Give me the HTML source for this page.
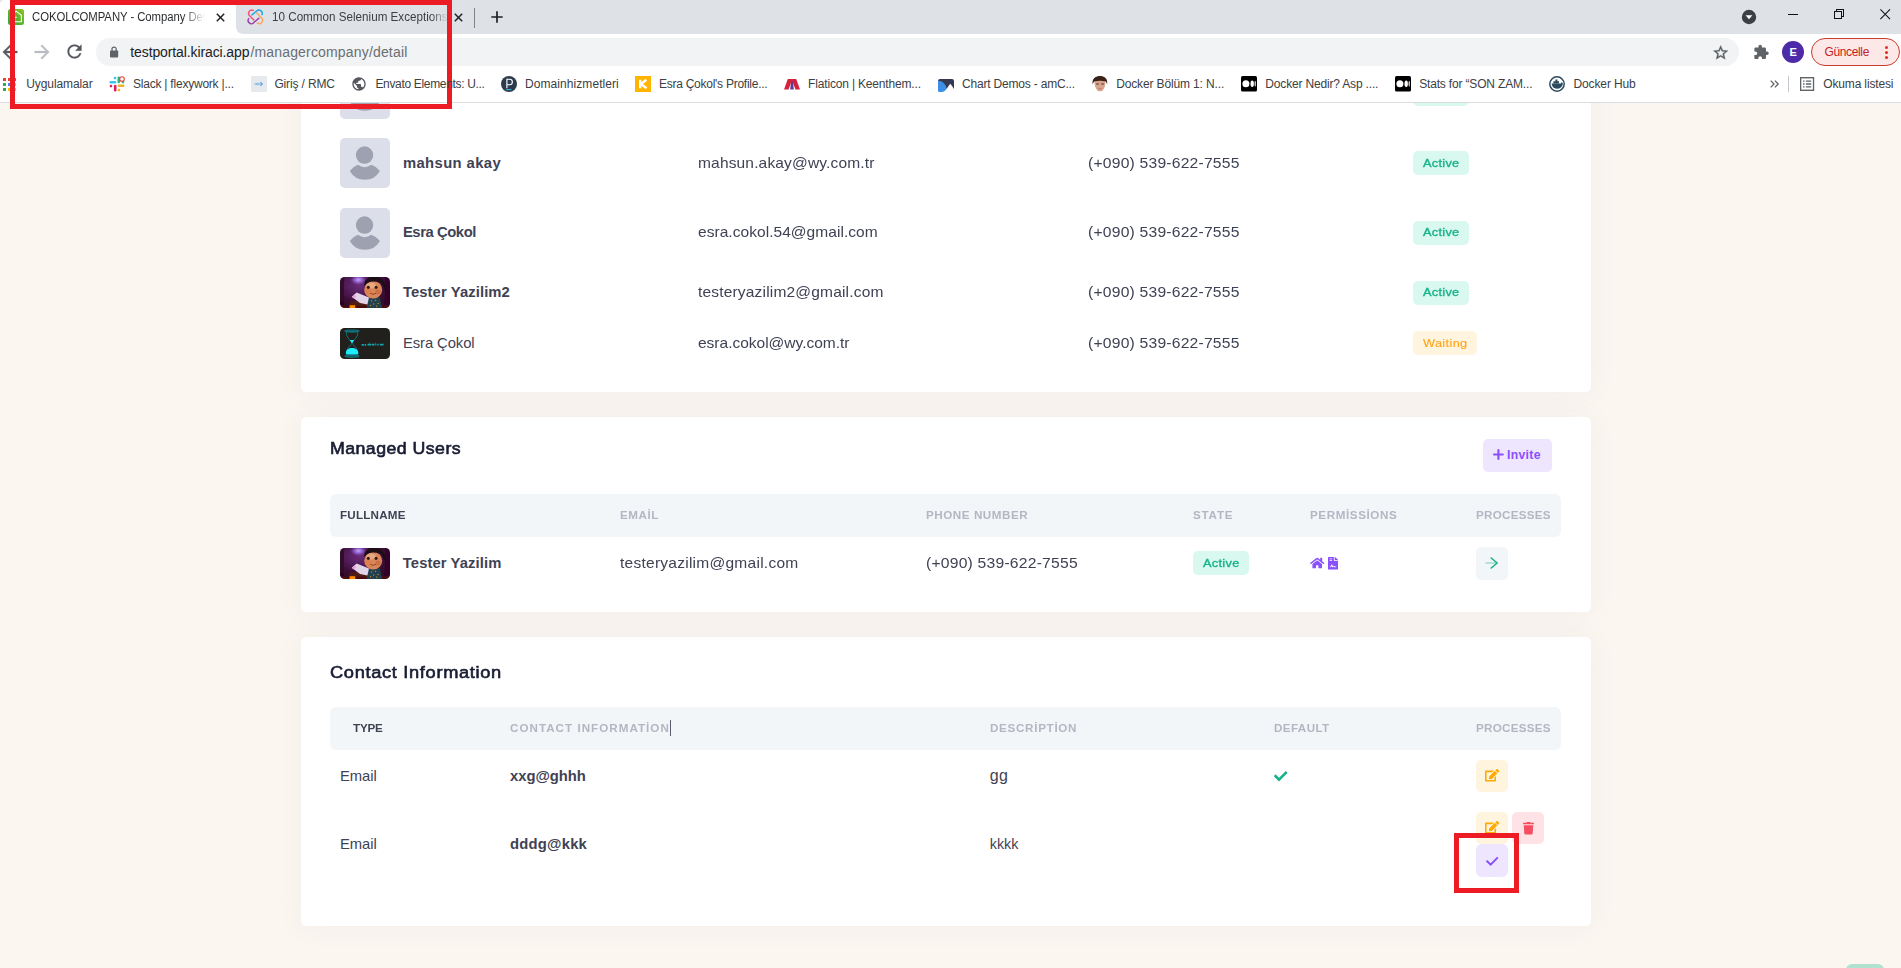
<!DOCTYPE html>
<html lang="en">
<head>
<meta charset="utf-8">
<title>COKOLCOMPANY - Company Detail</title>
<style>
*{box-sizing:border-box;margin:0;padding:0}
html,body{width:1901px;height:968px;overflow:hidden}
body{position:relative;background:#fbf6f0;font-family:"Liberation Sans",sans-serif;}
.a{position:absolute}
.t{position:absolute;white-space:nowrap;line-height:1;}
.card{position:absolute;left:301px;width:1290px;background:#fff;border-radius:5.5px;box-shadow:0 0 30px 0 rgba(82,63,105,.05)}
.th{position:absolute;left:330px;width:1231px;height:43px;background:#f3f6f9;border-radius:6px}
.av{position:absolute;left:340px;width:50px;height:50px;border-radius:5px;background:#dcdfe9;overflow:hidden}
.bdg{position:absolute;height:24px;border-radius:5px}
.btn{position:absolute;width:32px;height:32px;border-radius:5px}
.red{position:absolute;border:5px solid #ed1c24}
svg{position:absolute;overflow:visible}
</style>
</head>
<body>
<!-- ================= PAGE ================= -->
<div class="card" style="top:60px;height:332px"></div>
<div class="card" style="top:417px;height:195px"></div>
<div class="card" style="top:637px;height:289px"></div>

<!-- card 1 rows -->
<div class="av" style="top:69px"><svg width="50" height="50" viewBox="0 0 50 50" style="left:0;top:0"><circle cx="24.55" cy="17.05" r="8.7" fill="#9ea1b0"/><path d="M9.8 32.9A18.7 18.7 0 0 1 17.9 26.8A11.75 11.75 0 0 0 31.3 26.8A18.7 18.7 0 0 1 39.9 32.9A17.27 17.27 0 0 1 9.8 32.9Z" fill="#9ea1b0"/></svg></div>
<div class="av" style="top:138px"><svg width="50" height="50" viewBox="0 0 50 50" style="left:0;top:0"><circle cx="24.55" cy="17.05" r="8.7" fill="#9ea1b0"/><path d="M9.8 32.9A18.7 18.7 0 0 1 17.9 26.8A11.75 11.75 0 0 0 31.3 26.8A18.7 18.7 0 0 1 39.9 32.9A17.27 17.27 0 0 1 9.8 32.9Z" fill="#9ea1b0"/></svg></div>
<div class="av" style="top:208px"><svg width="50" height="50" viewBox="0 0 50 50" style="left:0;top:0"><circle cx="24.55" cy="17.05" r="8.7" fill="#9ea1b0"/><path d="M9.8 32.9A18.7 18.7 0 0 1 17.9 26.8A11.75 11.75 0 0 0 31.3 26.8A18.7 18.7 0 0 1 39.9 32.9A17.27 17.27 0 0 1 9.8 32.9Z" fill="#9ea1b0"/></svg></div>

<!-- photo: boy -->
<svg width="50" height="31" viewBox="0 0 50 31" style="left:340px;top:277px">
<defs>
<clipPath id="cp1"><rect width="50" height="31" rx="4.5"/></clipPath>
<clipPath id="cp2"><rect width="50" height="31" rx="4.5"/></clipPath>
<filter id="bl" x="-10%" y="-10%" width="120%" height="120%"><feGaussianBlur stdDeviation=".6"/></filter>
<radialGradient id="gl1" cx="0.4" cy="0.3" r="0.65"><stop offset="0" stop-color="#6a2c78"/><stop offset="0.5" stop-color="#4a1850"/><stop offset="1" stop-color="#3a0a30" stop-opacity="0"/></radialGradient>
<radialGradient id="gl2" cx="0.5" cy="0.5" r="0.5"><stop offset="0" stop-color="#c6a8f6"/><stop offset="0.5" stop-color="#9a68e0" stop-opacity=".8"/><stop offset="1" stop-color="#7a3aa0" stop-opacity="0"/></radialGradient>
</defs>
<g clip-path="url(#cp1)" filter="url(#bl)">
<rect x="-2" y="-2" width="54" height="35" fill="#34082a"/>
<rect x="-2" y="-2" width="54" height="35" fill="url(#gl1)"/>
<ellipse cx="18.5" cy="2.8" rx="8.5" ry="5.4" fill="url(#gl2)"/>
<rect x="44.500000000000004" y="-2" width="8" height="35" fill="#33062a" opacity=".85"/>
<rect x="-2" y="-2" width="6" height="35" fill="#2a0620" opacity=".7"/>
<path d="M10 24.6L17 23.4 28 27 28 33H8Z" fill="#4e1a12"/>
<path d="M-2 28.8H52V33H-2Z" fill="#4a1010"/>
<path d="M9.6 28.2h5.6V32H9.600000000000001Z" fill="#ff8a00"/>
<path d="M28.5 20.6L40 20.2 42 31H26.6Z" fill="#24404e"/>
<path d="M31 24h1.2M35 23.4h1.2M33 27h1.2M37.5 26.5h1.2M30 28.6h1.2M36 29.2h1.2" stroke="#c8962a" stroke-width="1"/>
<path d="M16.6 15.4L29 20.6 27.4 27.6 20 26 11.8 19.8Z" fill="#e2d4ea"/>
<path d="M11.8 19.8L14.6 17.4 16.4 19.4 13.6 21.4Z" fill="#e6a6d6"/>
<ellipse cx="33.2" cy="12.8" rx="9" ry="8.8" fill="#d8875a"/>
<ellipse cx="31" cy="8.5" rx="5" ry="3" fill="#eab088" opacity=".8"/>
<ellipse cx="28.6" cy="14.8" rx="3" ry="2.6" fill="#e27a3e" opacity=".7"/>
<ellipse cx="38" cy="15" rx="2.6" ry="2.4" fill="#c8683a" opacity=".7"/>
<path d="M24.3 9.5C23.5 2.5 29 -.6 34 -.4C40.500000000000004 -.2 45.6 3.6 45 10.6C43.6 7.800000000000001 41.6 5.6 38.6 5C34.5 4.2 30 4.4 27.6 6C26 7 25 8.2 24.3 9.5Z" fill="#1a0d12"/>
<path d="M42.5 6.5C45 8 45.6 11 44.6 13.4C43.6 12 43 9.6 42.5 6.5Z" fill="#1a0d12"/>
<ellipse cx="28.3" cy="10.3" rx="1.45" ry="1.6" fill="#3a140c"/>
<ellipse cx="36.1" cy="10.3" rx="1.45" ry="1.6" fill="#3a140c"/>
<path d="M30.3 16.4Q33 18.2 36 16.3" stroke="#8a3a22" stroke-width=".9" fill="none"/>
</g></svg>

<!-- photo: hourglass -->
<svg width="50" height="31" viewBox="0 0 50 31" style="left:340px;top:328px">
<defs><filter id="bl2" x="-10%" y="-10%" width="120%" height="120%"><feGaussianBlur stdDeviation=".35"/></filter></defs>
<rect width="50" height="31" rx="4.5" fill="#22201c"/>
<g filter="url(#bl2)">
<ellipse cx="12" cy="3.1" rx="7.300000000000001" ry="1.1" fill="#0a5a62" stroke="#109aa4" stroke-width=".6"/>
<ellipse cx="12" cy="28.2" rx="7.300000000000001" ry="1.1" fill="#0a5a62" stroke="#109aa4" stroke-width=".6"/>
<g stroke="#0f7a84" stroke-width=".9" fill="none">
<path d="M6.3 4.4C6.3 9 9.5 11.500000000000002 11.2 13.6L12 15.6 12.8 13.6C14.5 11.5 17.9 9 17.9 4.4"/>
<path d="M12 15.6C10 18 6.2 20 6.2 26.6M12 15.6C14 18 18 20 18 26.6"/>
</g>
<path d="M9.7 12.1h4.5L12 15.2Z" fill="#1cecfc"/>
<path d="M5.9 25C5.9 21.6 8.6 20 12 20S18.2 21.6 18.2 25C18.2 26.2 17.6 26.6 16.6 26.6H7.4C6.4 26.6 5.9 26.2 5.9 25Z" fill="#1cecfc"/>
<path d="M21.6 16.8h2.2m.7 0h1.6M27.500000000000004 16.6h3.6m.6 0h2.8m.8 0h1m.9 0h1.4m1.2 0h3.8" stroke="#12a4ae" stroke-width="1.7" fill="none"/>
<path d="M29.3 14.6v1M35.4 14.600000000000001v1" stroke="#12a4ae" stroke-width=".6"/>
</g>
</svg>

<!-- badges card1 -->
<div class="bdg" style="left:1413px;top:82px;width:56px;background:#d9f8ef"></div>
<div class="bdg" style="left:1413px;top:151px;width:56px;background:#d9f8ef"></div>
<div class="bdg" style="left:1413px;top:221px;width:56px;background:#d9f8ef"></div>
<div class="bdg" style="left:1413px;top:281px;width:56px;background:#d9f8ef"></div>
<div class="bdg" style="left:1413px;top:331px;width:64px;background:#fff4de"></div>

<!-- card 2 -->
<div class="a" style="left:1483px;top:439px;width:69px;height:33px;border-radius:5px;background:#eee5ff"></div>
<svg width="11" height="11" viewBox="0 0 11 11" style="left:1493.4px;top:448.9px"><path d="M5.4 1v9M1 5.5h8.8" stroke="#8950fc" stroke-width="2.1" stroke-linecap="round" stroke-linejoin="round"/></svg>
<div class="th" style="top:494px"></div>
<svg width="50" height="31" viewBox="0 0 50 31" style="left:340px;top:548px">
<g clip-path="url(#cp2)" filter="url(#bl)">
<rect x="-2" y="-2" width="54" height="35" fill="#34082a"/>
<rect x="-2" y="-2" width="54" height="35" fill="url(#gl1)"/>
<ellipse cx="18.5" cy="2.8" rx="8.5" ry="5.4" fill="url(#gl2)"/>
<rect x="44.500000000000004" y="-2" width="8" height="35" fill="#33062a" opacity=".85"/>
<rect x="-2" y="-2" width="6" height="35" fill="#2a0620" opacity=".7"/>
<path d="M10 24.6L17 23.4 28 27 28 33H8Z" fill="#4e1a12"/>
<path d="M-2 28.8H52V33H-2Z" fill="#4a1010"/>
<path d="M9.6 28.2h5.6V32H9.600000000000001Z" fill="#ff8a00"/>
<path d="M28.5 20.6L40 20.2 42 31H26.6Z" fill="#24404e"/>
<path d="M31 24h1.2M35 23.4h1.2M33 27h1.2M37.5 26.5h1.2M30 28.6h1.2M36 29.2h1.2" stroke="#c8962a" stroke-width="1"/>
<path d="M16.6 15.4L29 20.6 27.4 27.6 20 26 11.8 19.8Z" fill="#e2d4ea"/>
<path d="M11.8 19.8L14.6 17.4 16.4 19.4 13.6 21.4Z" fill="#e6a6d6"/>
<ellipse cx="33.2" cy="12.8" rx="9" ry="8.8" fill="#d8875a"/>
<ellipse cx="31" cy="8.5" rx="5" ry="3" fill="#eab088" opacity=".8"/>
<ellipse cx="28.6" cy="14.8" rx="3" ry="2.6" fill="#e27a3e" opacity=".7"/>
<ellipse cx="38" cy="15" rx="2.6" ry="2.4" fill="#c8683a" opacity=".7"/>
<path d="M24.3 9.5C23.5 2.5 29 -.6 34 -.4C40.500000000000004 -.2 45.6 3.6 45 10.6C43.6 7.800000000000001 41.6 5.6 38.6 5C34.5 4.2 30 4.4 27.6 6C26 7 25 8.2 24.3 9.5Z" fill="#1a0d12"/>
<path d="M42.5 6.5C45 8 45.6 11 44.6 13.4C43.6 12 43 9.6 42.5 6.5Z" fill="#1a0d12"/>
<ellipse cx="28.3" cy="10.3" rx="1.45" ry="1.6" fill="#3a140c"/>
<ellipse cx="36.1" cy="10.3" rx="1.45" ry="1.6" fill="#3a140c"/>
<path d="M30.3 16.4Q33 18.2 36 16.3" stroke="#8a3a22" stroke-width=".9" fill="none"/>
</g></svg>
<div class="bdg" style="left:1193px;top:551px;width:56px;background:#d9f8ef"></div>
<!-- home icon -->
<svg width="14.4" height="12" viewBox="0 0 576 512" preserveAspectRatio="none" style="left:1310px;top:557px"><path fill="#8950fc" d="M280.4 148.3L96 300.1V464a16 16 0 0 0 16 16l112.1-.3a16 16 0 0 0 15.900000000000006-16V368a16 16 0 0 1 16-16h64a16 16 0 0 1 16 16v95.600000000000023a16 16 0 0 0 16 16.100000000000023L464 480a16 16 0 0 0 16-16V300L295.700000000000045 148.3a12.200000000000003 12.200000000000003 0 0 0-15.300000000000011 0zM571.6 251.5L488 182.600000000000023V44.100000000000023a12 12 0 0 0-12-12h-56a12 12 0 0 0-12 12v72.600000000000023L318.500000000000057 43a48 48 0 0 0-61 0L4.300000000000011 251.5a12 12 0 0 0-1.600000000000023 16.900000000000006l25.5 31A12 12 0 0 0 45.200000000000045 301l235.200000000000045-193.7a12.200000000000003 12.200000000000003 0 0 1 15.300000000000011 0L530.900000000000091 301a12 12 0 0 0 16.900000000000091-1.600000000000023l25.5-31a12 12 0 0 0-1.700000000000045-16.900000000000006z"/></svg>
<!-- file icon -->
<svg width="10" height="12.6" viewBox="0 0 384 512" preserveAspectRatio="none" style="left:1328px;top:556.8px"><path fill="#8950fc" d="M224 136V0H24C10.7 0 0 10.7 0 24v464c0 13.3 10.7 24 24 24h336c13.3 0 24-10.7 24-24V160H248c-13.2 0-24-10.8-24-24zM64 72c0-4.420000000000002 3.58-8 8-8h80c4.420000000000002 0 8 3.58 8 8v16c0 4.420000000000002-3.58 8-8 8H72c-4.420000000000002 0-8-3.58-8-8V72zm0 64c0-4.420000000000002 3.58-8 8-8h80c4.420000000000002 0 8 3.58 8 8v16c0 4.420000000000002-3.58 8-8 8H72c-4.420000000000002 0-8-3.58-8-8v-16zm192.81 248H304c8.84 0 16 7.16 16 16s-7.16 16-16 16h-47.19c-16.45 0-31.27-9.14-38.64-23.86-2.95-5.92-8.09-6.52-10.17-6.52s-7.22.59-10.02 6.19l-7.67 15.34a15.986 15.986 0 0 1-14.31 8.84c-.38 0-.75-.02-1.14-.05-6.45-.45-12-4.750000000000002-14.030000000000001-10.890000000000001L144 354.59l-10.61 31.88c-5.89 17.66-22.38 29.53-41 29.53H80c-8.84 0-16-7.16-16-16s7.16-16 16-16h12.39c4.830000000000002 0 9.11-3.08 10.64-7.66l18.19-54.64c3.3-9.81 12.440000000000001-16.41 22.78-16.41s19.48 6.59 22.77 16.41l13.88 41.64c19.77-16.19 54.05-9.7 66 14.16 2.02 4.06 5.96 6.5 10.16 6.5zM377 105L279.1 7c-4.5-4.5-10.6-7-17-7H256v128h128v-6.1c0-6.3-2.5-12.4-7-16.9z"/></svg>
<div class="btn" style="left:1476px;top:547px;height:33px;background:#f3f6f9"></div>
<svg width="14" height="12" viewBox="0 0 14 12" style="left:1485.3px;top:557px"><path d="M.9 6h10.5" stroke="#17b28a" stroke-width="1.3" fill="none" stroke-linecap="round" opacity=".38"/><path d="M6.200000000000001 1l6 5-6 5" stroke="#17b28a" stroke-width="1.6" fill="none" stroke-linecap="round" stroke-linejoin="round"/></svg>

<!-- card 3 -->
<div class="th" style="top:707px"></div>
<div class="a" style="left:670.3px;top:720px;width:1px;height:16px;background:#5a5d70"></div>
<svg width="13.4" height="10.4" viewBox="0 0 512 400" preserveAspectRatio="none" style="left:1274px;top:770.6px"><path fill="#17b28a" d="M173.9 383.4l-166.4-166.4c-10-10-10-26.2 0-36.2l36.2-36.2c10-10 26.2-10 36.2 0L192 256.7 432.1 16.6c10-10 26.2-10 36.2 0l36.2 36.2c10 10 10 26.2 0 36.2l-294.4 294.4c-10 10-26.2 10-36.2 0z"/></svg>
<div class="btn" style="left:1476px;top:760px;background:#fff4de"></div>
<div class="btn" style="left:1476px;top:812px;background:#fff4de"></div>
<div class="btn" style="left:1512px;top:812px;background:#ffe2e5"></div>
<div class="btn" style="left:1476px;top:844px;height:33px;background:#eee5ff;border-radius:6px"></div>
<!-- edit icons -->
<svg width="14.2" height="12.6" viewBox="0 0 576 512" preserveAspectRatio="none" style="left:1485px;top:769.2px"><path fill="#ffa800" d="M402.6 83.2l90.2 90.2c3.8 3.8 3.8 10 0 13.8L274.4 405.6l-92.8 10.3c-12.4 1.4-22.9-9.1-21.5-21.5l10.3-92.8L388.8 83.2c3.8-3.8 10-3.8 13.8 0zm162-22.9l-48.8-48.8c-15.2-15.2-39.9-15.2-55.2 0l-35.4 35.4c-3.8 3.8-3.8 10 0 13.8l90.2 90.2c3.8 3.8 10 3.8 13.8 0l35.4-35.4c15.2-15.3 15.2-40 0-55.2zM384 346.2V448H64V128h229.8c3.2 0 6.2-1.3 8.5-3.5l40-40c7.6-7.6 2.2-20.5-8.5-20.5H48C21.5 64 0 85.5 0 112v352c0 26.5 21.5 48 48 48h352c26.5 0 48-21.5 48-48V306.2c0-10.7-12.9-16-20.5-8.500000000000002l-40 40c-2.2 2.3-3.5 5.3-3.5 8.5z"/></svg>
<svg width="14.2" height="12.6" viewBox="0 0 576 512" preserveAspectRatio="none" style="left:1485px;top:821.2px"><path fill="#ffa800" d="M402.6 83.2l90.2 90.2c3.8 3.8 3.8 10 0 13.8L274.4 405.6l-92.8 10.3c-12.4 1.4-22.9-9.1-21.5-21.5l10.3-92.8L388.8 83.2c3.8-3.8 10-3.8 13.8 0zm162-22.9l-48.8-48.8c-15.2-15.2-39.9-15.2-55.2 0l-35.4 35.4c-3.8 3.8-3.8 10 0 13.8l90.2 90.2c3.8 3.8 10 3.8 13.8 0l35.4-35.4c15.2-15.3 15.2-40 0-55.2zM384 346.2V448H64V128h229.8c3.2 0 6.2-1.3 8.5-3.5l40-40c7.6-7.6 2.2-20.5-8.5-20.5H48C21.5 64 0 85.5 0 112v352c0 26.5 21.5 48 48 48h352c26.5 0 48-21.5 48-48V306.2c0-10.7-12.9-16-20.5-8.500000000000002l-40 40c-2.2 2.3-3.5 5.3-3.5 8.5z"/></svg>
<!-- trash -->
<svg width="11" height="12.6" viewBox="0 0 448 512" preserveAspectRatio="none" style="left:1522.5px;top:821.5px"><path fill="#f64e60" d="M432 32H312l-9.4-18.7A24 24 0 0 0 281.1 0H166.8a23.72 23.72 0 0 0-21.4 13.3L136 32H16A16 16 0 0 0 0 48v32a16 16 0 0 0 16 16h416a16 16 0 0 0 16-16V48a16 16 0 0 0-16-16zM53.2 467a48 48 0 0 0 47.9 45h245.8a48 48 0 0 0 47.9-45L416 128H32z"/></svg>
<!-- purple check -->
<svg width="14" height="10" viewBox="0 0 14 10" style="left:1485px;top:855.5px"><path d="M1.6 4.7L5.7 8.7 12.8 1.4" stroke="#8950fc" stroke-width="2" fill="none"/></svg>

<!-- scrolltop -->
<div class="a" style="left:1846px;top:964px;width:38px;height:38px;border-radius:6px;background:#b0e2cf"></div>

<!-- ================= BROWSER CHROME ================= -->
<div class="a" style="left:0;top:0;width:1901px;height:34px;background:#dee1e6"></div>
<div class="a" style="left:0;top:34px;width:1901px;height:68px;background:#fff"></div>
<div class="a" style="left:0;top:102px;width:1901px;height:1px;background:#dadce0"></div>
<!-- active tab -->
<svg width="252" height="34" viewBox="0 0 252 34" style="left:-8px;top:0"><path d="M0 34H8V4C8 1.600000000000001 9.6 0 12 0H236C241 0 244 3 244 8V26C244 31 247 34 252 34Z" fill="#fff"/></svg>
<!-- favicon 1 -->
<svg width="16" height="16" viewBox="0 0 16 16" style="left:8px;top:9px"><defs><linearGradient id="fg" x1="0" y1="1" x2="1" y2="0"><stop offset="0" stop-color="#2ea836"/><stop offset="1" stop-color="#8cc21f"/></linearGradient></defs><rect width="16" height="16" rx="2.5" fill="url(#fg)"/><path d="M3.4 12.7V6.2L8.1 2.1 13.4 6.2V12.7Z" fill="none" stroke="#fff" stroke-width="1.1" stroke-linejoin="round"/><path d="M6.6 12.7V8.2h2.2" fill="none" stroke="#fff" stroke-width="1.1"/></svg>
<!-- tab close x -->
<svg width="9" height="9" viewBox="0 0 9 9" style="left:215.5px;top:12.5px"><path d="M.8 .8l7.4 7.4M8.2 .8L.8 8.2" stroke="#202124" stroke-width="1.5"/></svg>
<!-- favicon 2 -->
<svg width="17" height="17" viewBox="0 0 17 17" style="left:246.5px;top:8.4px"><g fill="none" stroke-width="1.6" stroke-linecap="round" transform="translate(1.1 1.3) scale(.885)">
<path d="M5.9 1.2A3.7 3.7 0 0 0 1.7 7.2L6.5 12.2" stroke="#f0527a"/>
<path d="M.7 10.5A3.7 3.7 0 0 0 6.9 14.6L12.2 10" stroke="#9b3fa8"/>
<path d="M9.7 4L14.8 9.4A3.7 3.7 0 0 1 10.4 15.4" stroke="#f8a860"/>
<path d="M4.3 6.3L9.6 2A3.7 3.7 0 0 1 15.7 6" stroke="#1aa7e8"/>
</g></svg>
<svg width="9" height="9" viewBox="0 0 9 9" style="left:454.3px;top:12.5px"><path d="M.8 .8l7.4 7.4M8.2 .8L.8 8.2" stroke="#202124" stroke-width="1.5"/></svg>
<div class="a" style="left:474.4px;top:7.5px;width:1px;height:20px;background:#808388"></div>
<svg width="12" height="12" viewBox="0 0 12 12" style="left:490.7px;top:11px"><path d="M6 .3v11.4M.3 6h11.4" stroke="#202124" stroke-width="1.7"/></svg>
<!-- window controls -->
<svg width="16" height="16" viewBox="0 0 16 16" style="left:1741px;top:8.5px"><circle cx="8" cy="8" r="7.2" fill="#3c4043"/><path d="M4.6 6.3h6.8L8 10.2Z" fill="#fff"/></svg>
<div class="a" style="left:1788px;top:14px;width:10px;height:1px;background:#111"></div>
<svg width="10" height="10" viewBox="0 0 10 10" style="left:1834px;top:9px" shape-rendering="crispEdges"><path d="M.5 2.5h7v7h-7Z" fill="none" stroke="#111" stroke-width="1"/><path d="M2.5 2.500000000000001V.5h7v7H7.5" fill="none" stroke="#111" stroke-width="1"/></svg>
<svg width="10.4" height="10.4" viewBox="0 0 11 11" style="left:1879.6px;top:8.8px"><path d="M.4 .4l10.2 10.2M10.6 .4L.4 10.6" stroke="#111" stroke-width="1.1"/></svg>
<!-- nav buttons -->
<svg width="22" height="22" viewBox="0 0 24 24" style="left:-.8px;top:41.05px"><path fill="#5a5e63" stroke="#5a5e63" stroke-width=".3" d="M20 11H7.83l5.59-5.59L12 4l-8 8 8 8 1.41-1.41L7.83 13H20v-2z"/></svg>
<svg width="22" height="22" viewBox="0 0 24 24" style="left:31.1px;top:41.05px"><path fill="#b9bcc0" stroke="#b9bcc0" stroke-width=".3" d="M12 4l-1.41 1.41L16.17 11H4v2h12.17l-5.58 5.59L12 20l8-8z"/></svg>
<svg width="21" height="21" viewBox="0 0 24 24" style="left:63.5px;top:41.4px"><path fill="#54585d" stroke="#54585d" stroke-width=".2" d="M17.65 6.35C16.2 4.9 14.21 4 12 4c-4.42 0-7.99 3.58-7.99 8s3.57 8 7.99 8c3.73 0 6.84-2.55 7.73-6h-2.08c-.82 2.33-3.04 4-5.650000000000001 4-3.31 0-6-2.69-6-6s2.69-6 6-6c1.66 0 3.14.69 4.22 1.78L13 11h7V4l-2.35 2.35z"/></svg>
<!-- omnibox -->
<div class="a" style="left:96px;top:38px;width:1643px;height:28px;border-radius:14px;background:#f1f3f4"></div>
<svg width="8.2" height="11.4" viewBox="0 0 8.2 11.4" style="left:110px;top:45.5px"><path d="M2 5V3.1a2.1 2.1 0 0 1 4.2 0V5" fill="none" stroke="#5f6368" stroke-width="1.25"/><rect x="0" y="4.4" width="8.2" height="7" rx=".9" fill="#5f6368"/></svg>
<svg width="17.4" height="17.4" viewBox="0 0 24 24" style="left:1712.2px;top:43.5px"><path fill="#5a5e63" stroke="#5a5e63" stroke-width=".5" d="M22 9.24l-7.19-.62L12 2 9.19 8.63 2 9.24l5.46 4.73L5.82 21 12 17.27 18.18 21l-1.63-7.03L22 9.24zM12 15.4l-3.76 2.27 1-4.28-3.32-2.88 4.38-.38L12 6.1l1.71 4.04 4.38.38-3.32 2.88 1 4.28L12 15.4z"/></svg>
<svg width="16.4" height="16.4" viewBox="0 0 24 24" style="left:1752.6px;top:43.9px"><path fill="#5f6368" d="M20.5 11H19V7c0-1.1-.9-2-2-2h-4V3.5C13 2.12 11.88 1 10.5 1S8 2.12 8 3.5V5H4c-1.1 0-1.99.9-1.99 2v3.8H3.500000000000001c1.49 0 2.7 1.21 2.7 2.7s-1.21 2.7-2.7 2.7H2V20c0 1.1.9 2 2 2h3.8v-1.5c0-1.49 1.21-2.7 2.7-2.7 1.49 0 2.7 1.21 2.7 2.7V22H17c1.1 0 2-.9 2-2v-4h1.5c1.38 0 2.5-1.12 2.5-2.5S21.88 11 20.5 11z"/></svg>
<div class="a" style="left:1782px;top:41px;width:22px;height:22px;border-radius:11px;background:#4d2ba8"></div>
<div class="a" style="left:1811px;top:38px;width:89px;height:28px;border-radius:14px;background:#fce8e6;border:1px solid #cc3a30"></div>
<div class="a" style="left:1885px;top:46.1px;width:3px;height:3px;border-radius:2px;background:#d93025;box-shadow:0 5px 0 #d93025,0 10px 0 #d93025"></div>

<!-- bookmarks icons -->
<svg width="13" height="13" viewBox="0 0 13 13" style="left:3px;top:77.5px">
<g><rect x="0" y="0" width="3" height="3" fill="#ea4335"/><rect x="5" y="0" width="3" height="3" fill="#ea4335"/><rect x="10" y="0" width="3" height="3" fill="#ea4335"/>
<rect x="0" y="5" width="3" height="3" fill="#34a853"/><rect x="5" y="5" width="3" height="3" fill="#4285f4"/><rect x="10" y="5" width="3" height="3" fill="#fbbc04"/>
<rect x="0" y="10" width="3" height="3" fill="#34a853"/><rect x="5" y="10" width="3" height="3" fill="#fbbc04"/><rect x="10" y="10" width="3" height="3" fill="#fbbc04"/></g></svg>
<!-- slack -->
<svg width="16" height="16" viewBox="0 0 16 16" style="left:109px;top:76px">
<g stroke-width="2.6" stroke-linecap="round" fill="none">
<path d="M1.8 6.2h4.2" stroke="#36c5f0"/><path d="M6 2v.1" stroke="#36c5f0"/>
<path d="M9.8 1.8v4.2" stroke="#2eb67d"/><path d="M14 6v.1" stroke="#2eb67d"/>
<path d="M10 9.8h4.2" stroke="#ecb22e"/><path d="M10 14v.1" stroke="#ecb22e"/>
<path d="M6.2 10v4.2" stroke="#e01e5a"/><path d="M2 10v.1" stroke="#e01e5a"/>
</g><circle cx="13" cy="3" r="2.3" fill="#fff" stroke="#e8453c" stroke-width="1.1"/></svg>
<!-- giris -->
<svg width="16" height="16" viewBox="0 0 16 16" style="left:251px;top:76px"><rect width="16" height="16" rx="1" fill="#e6e9ee"/><path d="M3.5 8h7.5M9.4 6.2l2 1.8-2 1.8" stroke="#6ea6dc" stroke-width="1.1" fill="none"/><path d="M5.5 6.8v2.4M7 6.6v2.8" stroke="#8dbbe6" stroke-width=".8"/></svg>
<!-- globe -->
<svg width="16" height="16" viewBox="0 0 24 24" style="left:351px;top:76px"><path fill="#54585d" d="M12 2C6.48 2 2 6.48 2 12s4.48 10 10 10 10-4.48 10-10S17.52 2 12 2zm-1 17.93c-3.95-.49-7-3.850000000000001-7-7.93 0-.62.08-1.21.21-1.79L9 15v1c0 1.1.9 2 2 2v1.93zm6.9-2.54c-.26-.81-1-1.39-1.9-1.39h-1v-3c0-.55-.45-1-1-1H8v-2h2c.55 0 1-.45 1-1V7h2c1.1 0 2-.9 2-2v-.41c2.93 1.19 5 4.06 5 7.41 0 2.08-.8 3.97-2.1 5.39z"/></svg>
<!-- P -->
<svg width="16" height="16" viewBox="0 0 16 16" style="left:501px;top:76px"><circle cx="8" cy="8" r="8" fill="#2c3b4e"/><path d="M5.9 12.300000000000001V3.2h2.7a2.75 2.75 0 0 1 0 5.5H5.9" fill="none" stroke="#fff" stroke-width="1.15"/><path d="M5.2 13.6h5.2" stroke="#3fb1e5" stroke-width="1.1"/></svg>
<!-- K -->
<svg width="16" height="16" viewBox="0 0 16 16" style="left:635px;top:76px"><rect width="16" height="16" fill="#ffb400"/><path d="M5.2 3.8v8.4M11.4 3.8L6 8l5.600000000000001 4.2" stroke="#fff" stroke-width="2.4" fill="none"/></svg>
<!-- flaticon M -->
<svg width="16" height="10.4" viewBox="0 0 16 10.4" style="left:784px;top:78.8px"><path d="M6.2 10.4L7.1 1.2h1.8L9.8 10.4Z" fill="#5a3e9a"/><path d="M0 10.4L3.8 0H8.5L4.5 10.4Z" fill="#d6213d"/><path d="M7.5 0H12.2L16 10.4H11.5Z" fill="#d6213d"/></svg>
<!-- amcharts -->
<svg width="16" height="13" viewBox="0 0 16 13" style="left:938.2px;top:78.8px"><path d="M0 2Q0 0 2 0H14Q16 0 16 2V10L13 5.6Q12.2 4.6 11.4 5.7L8.600000000000001 10C7.6 6 5 2.6 0 2.4Z" fill="#353a52"/><path d="M0 1.8C4.4 1.8 7.400000000000001 5 8.600000000000001 9.8C7.6 11.700000000000001 6 12.8 3.6 13H1.6Q0 13 0 11.4Z" fill="#3c8ee6"/></svg>
<!-- face -->
<svg width="16" height="16" viewBox="0 0 16 16" style="left:1092px;top:76px"><path d="M2.6 4.6H13.2C13.8 9 12.6 12.4 10.6 14.4Q8 16.2 5.4 14.4C3.4 12.4 2.2 9 2.6 4.6Z" fill="#d9a48c"/><path d="M.7 8.4C-.4 2.4 4 0 8 0S16.2 2.4 15.1 8.4C14.7 6.6 14 5.6 13 5.3C10 4.5 6 4.5 3 5.3C2 5.6 1.2 6.6.7 8.4Z" fill="#3a2218"/><path d="M4.4 8h2.3M9.4 8h2.3" stroke="#3a2218" stroke-width="1"/><path d="M6.4 12.6Q8 13.4 9.6 12.600000000000001" stroke="#a86a5a" stroke-width=".8" fill="none"/></svg>
<!-- medium x2 -->
<svg width="16" height="15.5" viewBox="0 0 16 15.5" style="left:1241.2px;top:76.1px"><rect width="16" height="15.5" rx="1.6" fill="#000"/><circle cx="4.9" cy="7.8" r="3.5" fill="#fff"/><ellipse cx="11.2" cy="7.8" rx="1.7" ry="3.3" fill="#fff"/><ellipse cx="14.2" cy="7.8" rx=".6" ry="3" fill="#fff"/></svg>
<svg width="16" height="15.5" viewBox="0 0 16 15.5" style="left:1395px;top:76.1px"><rect width="16" height="15.5" rx="1.6" fill="#000"/><circle cx="4.9" cy="7.8" r="3.5" fill="#fff"/><ellipse cx="11.2" cy="7.8" rx="1.7" ry="3.3" fill="#fff"/><ellipse cx="14.2" cy="7.8" rx=".6" ry="3" fill="#fff"/></svg>
<!-- docker hub -->
<svg width="16" height="16" viewBox="0 0 16 16" style="left:1549px;top:76px"><circle cx="8" cy="8" r="7.2" fill="#fff" stroke="#2b4a5e" stroke-width="1.5"/><path d="M2.6 7.6H11.4C12 7.6 12.4 7 12.3 6.3 13 6.6 13.6 7 14 7.4 13.4 11 11 12.8 7.8 12.8 5 12.8 3 11 2.6 7.6Z" fill="#2b4a5e"/><path d="M4.4 5.2H10V7.6H4.4ZM6.4 3.4H8.4V5.2H6.4Z" fill="#2b4a5e"/></svg>
<!-- overflow chevrons -->
<svg width="9" height="8" viewBox="0 0 9 8" style="left:1769.5px;top:79.7px"><path d="M.7 .6L4 4 .7 7.4M4.9 .6L8.2 4 4.9 7.4" stroke="#5f6368" stroke-width="1.3" fill="none"/></svg>
<div class="a" style="left:1788px;top:76px;width:1px;height:16px;background:#c4c7cc"></div>
<svg width="14.2" height="14" viewBox="0 0 15 14" preserveAspectRatio="none" style="left:1799.8px;top:77px"><rect x=".7" y=".7" width="13.6" height="12.6" fill="none" stroke="#5f6368" stroke-width="1.4"/><path d="M3.2 4.2h1.6M6.2 4.2h5.6M3.2 7h1.6M6.2 7h5.6M3.2 9.8h1.6M6.2 9.8h5.6" stroke="#5f6368" stroke-width="1.3"/></svg>

<!-- ================= RED ANNOTATIONS ================= -->
<div class="red" style="left:10px;top:0;width:442px;height:109px"></div>
<div class="red" style="left:1454px;top:833px;width:65px;height:60px"></div>

<div class="t" style="left:32.2px;top:11.01px;font-size:12px;color:#2b2d30;letter-spacing:-0.06px;width:186.5px;overflow:hidden;padding-bottom:4px;-webkit-mask-image:linear-gradient(90deg,#000 85%,transparent 98%);mask-image:linear-gradient(90deg,#000 85%,transparent 98%);transform:scaleX(0.945);transform-origin:0 0;">COKOLCOMPANY - Company Detail</div>
<div class="t" style="left:271.5px;top:11.01px;font-size:12px;color:#3c4043;letter-spacing:0.01px;width:181.5px;overflow:hidden;padding-bottom:4px;-webkit-mask-image:linear-gradient(90deg,#000 90%,transparent 100%);mask-image:linear-gradient(90deg,#000 90%,transparent 100%);transform:scaleX(0.97);transform-origin:0 0;">10 Common Selenium Exceptions</div>
<div class="t" style="left:130.3px;top:45.01px;font-size:14px;color:#202124;letter-spacing:-0.11px;">testportal.kiraci.app</div>
<div class="t" style="left:250.4px;top:45.01px;font-size:14px;color:#6a6e73;letter-spacing:0.17px;">/managercompany/detail</div>
<div class="t" style="left:26.3px;top:78.01px;font-size:12px;color:#3c4043;letter-spacing:-0.10px;">Uygulamalar</div>
<div class="t" style="left:133.0px;top:78.01px;font-size:12px;color:#3c4043;letter-spacing:-0.22px;">Slack | flexywork |...</div>
<div class="t" style="left:274.4px;top:78.01px;font-size:12px;color:#3c4043;letter-spacing:-0.14px;">Giriş / RMC</div>
<div class="t" style="left:375.4px;top:78.01px;font-size:12px;color:#3c4043;letter-spacing:-0.33px;">Envato Elements: U...</div>
<div class="t" style="left:525.0px;top:78.01px;font-size:12px;color:#3c4043;letter-spacing:0.07px;">Domainhizmetleri</div>
<div class="t" style="left:659.0px;top:78.01px;font-size:12px;color:#3c4043;letter-spacing:-0.26px;">Esra Çokol's Profile...</div>
<div class="t" style="left:808.1px;top:78.01px;font-size:12px;color:#3c4043;letter-spacing:-0.17px;">Flaticon | Keenthem...</div>
<div class="t" style="left:962.0px;top:78.01px;font-size:12px;color:#3c4043;letter-spacing:-0.19px;">Chart Demos - amC...</div>
<div class="t" style="left:1116.2px;top:78.01px;font-size:12px;color:#3c4043;letter-spacing:-0.14px;">Docker Bölüm 1: N...</div>
<div class="t" style="left:1265.3px;top:78.01px;font-size:12px;color:#3c4043;letter-spacing:-0.17px;">Docker Nedir? Asp ....</div>
<div class="t" style="left:1419.2px;top:78.01px;font-size:12px;color:#3c4043;letter-spacing:-0.17px;">Stats for “SON ZAM...</div>
<div class="t" style="left:1573.5px;top:78.01px;font-size:12px;color:#3c4043;letter-spacing:-0.12px;">Docker Hub</div>
<div class="t" style="left:1823.2px;top:78.01px;font-size:12px;color:#3c4043;letter-spacing:-0.14px;">Okuma listesi</div>
<div class="t" style="left:1824.4px;top:46.01px;font-size:12px;color:#c5221f;letter-spacing:-0.34px;">Güncelle</div>
<div class="t" style="left:1789.6px;top:47.00px;font-size:11px;color:#fff;font-weight:700;">E</div>
<div class="t" style="left:402.9px;top:156.00px;font-size:14.8px;color:#3f4254;font-weight:700;letter-spacing:0.40px;">mahsun akay</div>
<div class="t" style="left:698.4px;top:156.00px;font-size:14.8px;color:#3f4254;letter-spacing:0.14px;transform:scaleX(1.05);transform-origin:0 0;">mahsun.akay@wy.com.tr</div>
<div class="t" style="left:1087.9px;top:156.00px;font-size:14.8px;color:#3f4254;letter-spacing:0.19px;transform:scaleX(1.06);transform-origin:0 0;">(+090) 539-622-7555</div>
<div class="t" style="left:402.9px;top:225.01px;font-size:14.8px;color:#3f4254;font-weight:700;letter-spacing:-0.42px;">Esra Çokol</div>
<div class="t" style="left:698.4px;top:225.01px;font-size:14.8px;color:#3f4254;letter-spacing:0.03px;transform:scaleX(1.05);transform-origin:0 0;">esra.cokol.54@gmail.com</div>
<div class="t" style="left:1087.9px;top:225.01px;font-size:14.8px;color:#3f4254;letter-spacing:0.19px;transform:scaleX(1.06);transform-origin:0 0;">(+090) 539-622-7555</div>
<div class="t" style="left:402.9px;top:285.00px;font-size:14.8px;color:#3f4254;font-weight:700;letter-spacing:0.10px;">Tester Yazilim2</div>
<div class="t" style="left:698.4px;top:285.00px;font-size:14.8px;color:#3f4254;letter-spacing:0.16px;transform:scaleX(1.05);transform-origin:0 0;">testeryazilim2@gmail.com</div>
<div class="t" style="left:1087.9px;top:285.00px;font-size:14.8px;color:#3f4254;letter-spacing:0.19px;transform:scaleX(1.06);transform-origin:0 0;">(+090) 539-622-7555</div>
<div class="t" style="left:402.9px;top:336.00px;font-size:14.8px;color:#3f4254;letter-spacing:-0.07px;">Esra Çokol</div>
<div class="t" style="left:698.4px;top:336.00px;font-size:14.8px;color:#3f4254;letter-spacing:-0.02px;transform:scaleX(1.05);transform-origin:0 0;">esra.cokol@wy.com.tr</div>
<div class="t" style="left:1087.9px;top:336.00px;font-size:14.8px;color:#3f4254;letter-spacing:0.19px;transform:scaleX(1.06);transform-origin:0 0;">(+090) 539-622-7555</div>
<div class="t" style="left:1422.9px;top:157.01px;font-size:11.6px;color:#17b28a;letter-spacing:0.27px;-webkit-text-stroke:0.35px currentColor;transform:scaleX(1.1);transform-origin:0 0;">Active</div>
<div class="t" style="left:1422.9px;top:226.01px;font-size:11.6px;color:#17b28a;letter-spacing:0.27px;-webkit-text-stroke:0.35px currentColor;transform:scaleX(1.1);transform-origin:0 0;">Active</div>
<div class="t" style="left:1422.9px;top:286.01px;font-size:11.6px;color:#17b28a;letter-spacing:0.27px;-webkit-text-stroke:0.35px currentColor;transform:scaleX(1.1);transform-origin:0 0;">Active</div>
<div class="t" style="left:1422.7px;top:337.01px;font-size:11.6px;color:#ffa51a;letter-spacing:0.32px;-webkit-text-stroke:0.15px currentColor;transform:scaleX(1.1);transform-origin:0 0;">Waiting</div>
<div class="t" style="left:330.4px;top:440.01px;font-size:16.3px;color:#181c32;letter-spacing:0.41px;-webkit-text-stroke:0.6px currentColor;transform:scaleX(1.09);transform-origin:0 0;">Managed Users</div>
<div class="t" style="left:1507.0px;top:449.00px;font-size:12.2px;color:#8950fc;font-weight:700;letter-spacing:0.33px;">Invite</div>
<div class="t" style="left:339.9px;top:510.00px;font-size:11.2px;color:#3f4254;font-weight:700;letter-spacing:0.21px;transform:scaleX(1.04);transform-origin:0 0;">FULLNAME</div>
<div class="t" style="left:620.2px;top:510.00px;font-size:11.2px;color:#b5b5c3;font-weight:700;letter-spacing:0.53px;transform:scaleX(1.04);transform-origin:0 0;">EMAİL</div>
<div class="t" style="left:926.3px;top:510.00px;font-size:11.2px;color:#b5b5c3;font-weight:700;letter-spacing:0.53px;transform:scaleX(1.04);transform-origin:0 0;">PHONE NUMBER</div>
<div class="t" style="left:1193.1px;top:510.00px;font-size:11.2px;color:#b5b5c3;font-weight:700;letter-spacing:0.77px;transform:scaleX(1.04);transform-origin:0 0;">STATE</div>
<div class="t" style="left:1310.0px;top:510.00px;font-size:11.2px;color:#b5b5c3;font-weight:700;letter-spacing:0.57px;transform:scaleX(1.04);transform-origin:0 0;">PERMİSSİONS</div>
<div class="t" style="left:1476.2px;top:510.00px;font-size:11.2px;color:#b5b5c3;font-weight:700;letter-spacing:0.25px;transform:scaleX(1.04);transform-origin:0 0;">PROCESSES</div>
<div class="t" style="left:402.8px;top:556.00px;font-size:14.8px;color:#3f4254;font-weight:700;letter-spacing:0.09px;">Tester Yazilim</div>
<div class="t" style="left:620.2px;top:556.00px;font-size:14.8px;color:#3f4254;letter-spacing:0.23px;transform:scaleX(1.05);transform-origin:0 0;">testeryazilim@gmail.com</div>
<div class="t" style="left:926.3px;top:556.00px;font-size:14.8px;color:#3f4254;letter-spacing:0.20px;transform:scaleX(1.06);transform-origin:0 0;">(+090) 539-622-7555</div>
<div class="t" style="left:1203.0px;top:557.01px;font-size:11.6px;color:#17b28a;letter-spacing:0.28px;-webkit-text-stroke:0.35px currentColor;transform:scaleX(1.1);transform-origin:0 0;">Active</div>
<div class="t" style="left:330.2px;top:664.01px;font-size:16.3px;color:#181c32;letter-spacing:0.60px;-webkit-text-stroke:0.6px currentColor;transform:scaleX(1.12);transform-origin:0 0;">Contact Information</div>
<div class="t" style="left:353.2px;top:723.01px;font-size:11.2px;color:#3f4254;font-weight:700;letter-spacing:-0.19px;transform:scaleX(1.04);transform-origin:0 0;">TYPE</div>
<div class="t" style="left:510.0px;top:723.01px;font-size:11.2px;color:#b5b5c3;font-weight:700;letter-spacing:0.98px;transform:scaleX(1.04);transform-origin:0 0;">CONTACT INFORMATİON</div>
<div class="t" style="left:989.6px;top:723.01px;font-size:11.2px;color:#b5b5c3;font-weight:700;letter-spacing:0.67px;transform:scaleX(1.04);transform-origin:0 0;">DESCRİPTİON</div>
<div class="t" style="left:1274.0px;top:723.01px;font-size:11.2px;color:#b5b5c3;font-weight:700;letter-spacing:0.39px;transform:scaleX(1.04);transform-origin:0 0;">DEFAULT</div>
<div class="t" style="left:1476.1px;top:723.01px;font-size:11.2px;color:#b5b5c3;font-weight:700;letter-spacing:0.26px;transform:scaleX(1.04);transform-origin:0 0;">PROCESSES</div>
<div class="t" style="left:340.0px;top:769.00px;font-size:14.8px;color:#3f4254;letter-spacing:-0.05px;">Email</div>
<div class="t" style="left:510.0px;top:769.00px;font-size:14.8px;color:#3f4254;font-weight:700;letter-spacing:-0.03px;">xxg@ghhh</div>
<div class="t" style="left:989.8px;top:768.01px;font-size:16px;color:#3f4254;letter-spacing:0.20px;">gg</div>
<div class="t" style="left:340.0px;top:837.00px;font-size:14.8px;color:#3f4254;letter-spacing:-0.05px;">Email</div>
<div class="t" style="left:510.0px;top:837.00px;font-size:14.8px;color:#3f4254;font-weight:700;letter-spacing:0.22px;">dddg@kkk</div>
<div class="t" style="left:989.8px;top:837.01px;font-size:14.3px;color:#3f4254;">kkkk</div>
</body>
</html>
